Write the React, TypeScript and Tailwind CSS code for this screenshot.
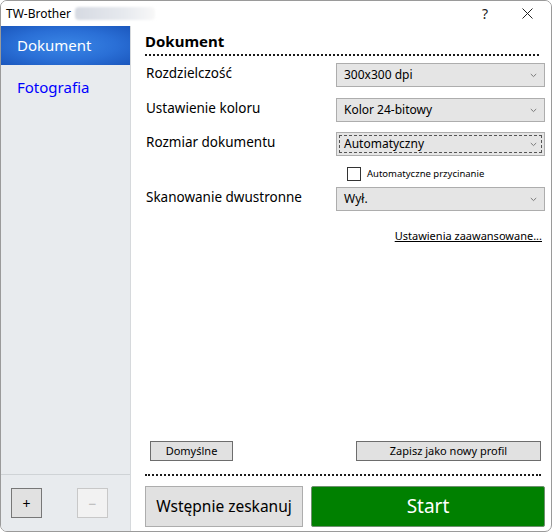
import React from 'react';

const font = { fontFamily: '"Noto Sans", "Open Sans", sans-serif' };

function Chevron() {
  return (
    <svg className="w-[7px] h-[5px]" viewBox="0 0 7 5" fill="none">
      <path d="M0.8 1 L3.5 3.6 L6.2 1" stroke="#7a7a7a" strokeWidth="1" />
    </svg>
  );
}

function Select({ value, focused }: { value: string; focused?: boolean }) {
  return (
    <div className="w-[209px] h-[24px] border border-[#adadad] bg-[#e5e5e5] p-[2px]">
      <div
        className={`h-full flex items-center justify-between pl-[4px] pr-[4px] ${
          focused ? 'border border-dashed border-[#555]' : 'border border-transparent'
        }`}
      >
        <span className="text-[12px] text-black leading-none">{value}</span>
        <Chevron />
      </div>
    </div>
  );
}

function Row({ label, value, focused }: { label: string; value: string; focused?: boolean }) {
  return (
    <div className="flex items-center h-[24px]">
      <span className="w-[190px] text-[13.5px] leading-[20px] text-black -mt-[4px]">{label}</span>
      <Select value={value} focused={focused} />
    </div>
  );
}

export default function App() {
  return (
    <div style={font} className="w-[552px] h-[532px] bg-white">
      <div className="w-full h-full border border-[#9a9a9a] rounded-[7px] overflow-hidden flex flex-col">
        {/* title bar */}
        <div className="h-[25px] flex items-center bg-white shrink-0">
          <span className="ml-[5px] text-[12px] text-black">TW-Brother</span>
          <div className="ml-[4px] w-[80px] h-[13px] rounded-sm bg-[linear-gradient(90deg,#d6dae2,#e6e9ee_60%,#f8f8f8)] blur-[1px]" />
          <div className="flex-1" />
          <span className="text-[14px] text-[#222] mr-[34px]">?</span>
          <svg className="w-[11px] h-[11px] mr-[18px]" viewBox="0 0 11 11" fill="none">
            <path d="M0.5 0.5 L10.5 10.5 M10.5 0.5 L0.5 10.5" stroke="#222" strokeWidth="1" />
          </svg>
        </div>

        <div className="flex flex-1 min-h-0">
          {/* sidebar */}
          <div className="w-[130px] shrink-0 bg-[#e8ebee] border-r border-[#d6d9dc] flex flex-col">
            <div className="h-[39px] flex items-center pl-[16px] bg-[radial-gradient(ellipse_at_center,#3a86e6_0%,#2a6fd6_55%,#1b57bd_100%)]">
              <span className="text-[15px] text-white">Dokument</span>
            </div>
            <div className="h-[45px] flex items-center pl-[16px]">
              <span className="text-[15px] text-[#0000ff]">Fotografia</span>
            </div>
            <div className="flex-1" />
            <div className="h-[57px] border-t border-[#cfd3d6] flex items-start pt-[13px] pl-[10px] gap-[35px]">
              <div className="w-[31px] h-[30px] border border-[#777] bg-[#e1e1e1] flex items-center justify-center text-[14px] text-black">+</div>
              <div className="w-[31px] h-[30px] border border-[#c8c8c8] bg-[#f2f2f2] flex items-center justify-center text-[14px] text-[#b8b8b8]">−</div>
            </div>
          </div>

          {/* content */}
          <div className="flex-1 flex flex-col pl-[14px] pr-[6px]">
            <div className="mr-[6px] pt-[3px] pb-[1px] border-b-2 border-dotted border-[#1a1a1a]">
              <span className="text-[15px] font-bold text-black">Dokument</span>
            </div>

            <div className="pl-[1px] mt-[7px] flex flex-col">
              <Row label="Rozdzielczość" value="300x300 dpi" />
              <div className="h-[11px]" />
              <Row label="Ustawienie koloru" value="Kolor 24-bitowy" />
              <div className="h-[10px]" />
              <Row label="Rozmiar dokumentu" value="Automatyczny" focused />
              <div className="flex items-center mt-[11px] ml-[201px] h-[14px]">
                <div className="w-[14px] h-[14px] border border-[#333] bg-white" />
                <span className="ml-[6px] text-[9.5px] text-black">Automatyczne przycinanie</span>
              </div>
              <div className="h-[6px]" />
              <Row label="Skanowanie dwustronne" value="Wył." />
              <div className="flex justify-end mt-[17px] pr-[3px]">
                <span className="text-[11px] text-black underline">Ustawienia zaawansowane...</span>
              </div>
            </div>

            <div className="flex-1" />

            <div className="flex justify-between items-center pl-[5px] pr-[4px]">
              <div className="w-[83px] h-[20px] border border-[#6d6d6d] bg-[#e1e1e1] flex items-center justify-center text-[11px] text-black">Domyślne</div>
              <div className="w-[185px] h-[20px] border border-[#6d6d6d] bg-[#e1e1e1] flex items-center justify-center text-[11px] text-black">Zapisz jako nowy profil</div>
            </div>

            <div className="mt-[13px] mr-[4px] border-b-2 border-dotted border-[#1a1a1a]" />

            <div className="flex gap-[8px] mt-[10px] mb-[4px]">
              <div className="w-[158px] h-[41px] border border-[#adadad] bg-[#e1e1e1] flex items-center justify-center text-[15.5px] text-black">Wstępnie zeskanuj</div>
              <div className="flex-1 h-[41px] border border-[#6f8f6f] rounded-[2px] bg-[#008000] flex items-center justify-center text-[19px] text-white">Start</div>
            </div>
          </div>
        </div>
      </div>
    </div>
  );
}
